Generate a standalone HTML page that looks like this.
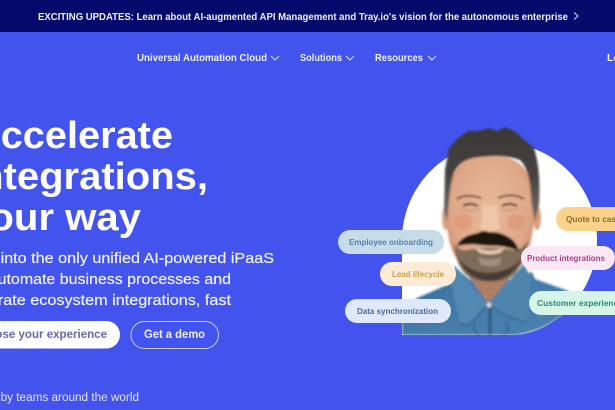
<!DOCTYPE html>
<html><head><meta charset="utf-8">
<style>
html,body{margin:0;padding:0;width:615px;height:410px;overflow:hidden;background:#4354ee}
svg{display:block;filter:blur(.35px)}
text{font-family:"Liberation Sans",sans-serif}
.h{font-size:38px;font-weight:700;fill:#fff}
.s{font-size:15px;fill:#eef0ff;stroke:#eef0ff;stroke-width:.2px}
.n{font-size:10.5px;font-weight:700;fill:#eef0ff}
.p{font-size:8.5px;font-weight:700}
</style></head><body>
<svg width="615" height="410" viewBox="0 0 615 410" xmlns="http://www.w3.org/2000/svg">
<defs>
<filter id="b"><feGaussianBlur stdDeviation="1"/></filter>
<radialGradient id="sk" cx=".5" cy=".42" r=".62"><stop offset="0" stop-color="#e8b99a"/><stop offset=".7" stop-color="#dfa888"/><stop offset="1" stop-color="#c98a68"/></radialGradient>
<linearGradient id="hr" x1="0" y1="0" x2="0" y2="1"><stop offset="0" stop-color="#3a3736"/><stop offset=".5" stop-color="#45423f"/><stop offset="1" stop-color="#76716c"/></linearGradient>
<linearGradient id="dn" x1="0" y1="0" x2="1" y2="1"><stop offset="0" stop-color="#386d9c"/><stop offset=".6" stop-color="#457dab"/><stop offset="1" stop-color="#4a82b2"/></linearGradient>
</defs>
<rect width="615" height="410" fill="#4354ee"/>
<rect width="615" height="32" fill="#04096b"/>
<text class="n" x="38" y="20" fill="#fff" textLength="530" lengthAdjust="spacingAndGlyphs">EXCITING UPDATES: Learn about AI-augmented API Management and Tray.io's vision for the autonomous enterprise</text>
<path d="M574 12.500l4 3.500-4 3.500" fill="none" stroke="#dfe3ff" stroke-width="1"/>
<text class="n" x="137" y="61" textLength="130" lengthAdjust="spacingAndGlyphs">Universal Automation Cloud</text>
<path d="M271 56l4 4 4-4" fill="none" stroke="#dfe3ff" stroke-width="1"/>
<text class="n" x="300" y="61" textLength="42" lengthAdjust="spacingAndGlyphs">Solutions</text>
<path d="M346 56l4 4 4-4" fill="none" stroke="#dfe3ff" stroke-width="1"/>
<text class="n" x="375" y="61" textLength="48" lengthAdjust="spacingAndGlyphs">Resources</text>
<path d="M428 56l4 4 4-4" fill="none" stroke="#dfe3ff" stroke-width="1"/>
<text class="n" x="607" y="61">Login</text>

<text class="h" x="-28" y="148" textLength="201" lengthAdjust="spacingAndGlyphs">Accelerate</text>
<text class="h" x="-32" y="189" textLength="240" lengthAdjust="spacingAndGlyphs">Integrations,</text>
<text class="h" x="-33" y="230" textLength="174" lengthAdjust="spacingAndGlyphs">your way</text>
<text class="s" x="-30" y="263" textLength="304" lengthAdjust="spacingAndGlyphs">Tap into the only unified AI-powered iPaaS</text>
<text class="s" x="-29" y="284" textLength="260" lengthAdjust="spacingAndGlyphs">to automate business processes and</text>
<text class="s" x="-49" y="305" textLength="280" lengthAdjust="spacingAndGlyphs">accelerate ecosystem integrations, fast</text>
<rect x="-40" y="321" width="160" height="27.500" rx="13.700" fill="#fff"/>
<text x="-27" y="338" font-size="11.500" font-weight="700" fill="#6468ae" textLength="134" lengthAdjust="spacingAndGlyphs">Choose your experience</text>
<rect x="131" y="321.500" width="87.500" height="27" rx="13.500" fill="none" stroke="#c9cffa" stroke-width="1"/>
<text x="144" y="338" font-size="11.500" font-weight="700" fill="#eef0ff" textLength="61" lengthAdjust="spacingAndGlyphs">Get a demo</text>
<text x="-42" y="401" font-size="11.500" fill="#e2e5ff" textLength="181" lengthAdjust="spacingAndGlyphs">Trusted by teams around the world</text>

<!-- portrait -->
<path d="M402 335V240a97 97 0 1 1 195 0a97 97 0 0 1-60 90Q525 335 510 335Z" fill="#fff"/>
<g filter="url(#b)">
<!-- shirt -->
<path d="M402 335V312L417 298L449 284L455 267L470 280H510L532 272L535 279L563 289Q585 296 566 312Q545 331 515 335Z" fill="url(#dn)"/>
<!-- collar -->
<path d="M449 276L455 266L488 304L468 326L460 323Z" fill="#5288b2"/>
<path d="M524 264L532 280L526 322L506 316L488 304Z" fill="#4f85ad"/>
<path d="M460 323L468 326L488 304L506 316L526 322" fill="none" stroke="#2b5880" stroke-width="1"/>
<path d="M490 306V335" stroke="#2b5880" stroke-width="3"/>
<circle cx="489" cy="305" r="2.500" fill="#cdd8de"/>
<path d="M476 322Q470 330 480 335M505 322Q512 330 503 335" stroke="#2f6089" stroke-width="1.500" fill="none"/>
<!-- neck -->
<path d="M458 262L488 303L524 262Z" fill="#b07f62"/>
<!-- ears -->
<ellipse cx="446" cy="218" rx="4" ry="12" fill="#d99e7c"/>
<ellipse cx="537" cy="218" rx="4" ry="12" fill="#d99e7c"/>
<!-- face -->
<path d="M447 200Q445 240 455 256Q468 276 490 280Q512 278 525 256Q535 240 534 200Q533 155 490 155Q449 155 447 200Z" fill="url(#sk)"/>
<ellipse cx="463" cy="222" rx="9" ry="8" fill="#dc9575" opacity=".6"/>
<ellipse cx="516" cy="222" rx="9" ry="8" fill="#dc9575" opacity=".6"/>
<!-- beard -->
<path d="M454 244Q456 270 472 279Q490 285 510 278Q524 268 528 240Q521 252 512 250Q505 248 490 248Q475 248 468 250Q460 252 454 244Z" fill="#7f6c59"/>
<path d="M458 258Q468 281 490 281Q512 281 523 256Q514 271 490 273Q470 273 458 258Z" fill="#483a30"/>
<path d="M478 257Q490 262 502 257L499 265Q490 268 481 265Z" fill="#a48e7c"/>
<path d="M474 247Q490 254 506 247L500 253Q490 256 480 253Z" fill="#e6c8b6"/>
<!-- mustache -->
<path d="M458 245Q463 236 477 234Q484 230 490 233Q498 232 507 237Q515 241 518 250Q506 245 492 245Q486 245 478 244Q468 243 458 245Z" fill="#1c1410" stroke="#1c1410" stroke-width="1.500"/>
<!-- brows and eyes -->
<path d="M457 199Q466 193 481 198M498 198Q512 192 524 199" fill="none" stroke="#54392a" stroke-width="1.800"/>
<path d="M463 206Q470 202 478 206M502 206Q509 202 517 206" fill="none" stroke="#3a2a22" stroke-width="2"/>
<path d="M462 209Q470 212 479 209M501 209Q509 212 518 209" fill="none" stroke="#c08c70" stroke-width="1"/>
<!-- nose -->
<path d="M483 205Q481 224 480 228Q490 235 500 228Q498 222 497 205Z" fill="#efc6a8"/>
<!-- hair -->
<path d="M444 210L447 222L449 200Q450 185 454 172Q462 158 480 157Q505 154 520 160Q528 168 530 185L532 205L535 222L539 205Q541 170 534 148L522 138L516 132L505 127L497 131L489 128L478 131L468 131L458 138L449 148L445 170Z" fill="url(#hr)"/>
</g>

<!-- pills -->
<rect x="338" y="230" width="106" height="24" rx="12" fill="#c6dde9"/>
<text class="p" x="349" y="245" fill="#5a80ad" textLength="84" lengthAdjust="spacingAndGlyphs">Employee onboarding</text>
<rect x="380" y="262" width="76" height="24" rx="12" fill="#fcecd6"/>
<text class="p" x="392" y="277" fill="#c8a04c" textLength="52" lengthAdjust="spacingAndGlyphs">Lead lifecycle</text>
<rect x="345" y="299" width="106" height="24" rx="12" fill="#dfe9fb"/>
<text class="p" x="357" y="314" fill="#4b6a9c" textLength="81" lengthAdjust="spacingAndGlyphs">Data synchronization</text>
<rect x="556" y="207" width="80" height="24" rx="12" fill="#fbd28b"/>
<text class="p" x="566" y="222" fill="#8a6c2c" textLength="55" lengthAdjust="spacingAndGlyphs">Quote to cash</text>
<rect x="521" y="246" width="94" height="24" rx="12" fill="#fbe8f4"/>
<text class="p" x="527" y="261" fill="#ab3f8a" textLength="78" lengthAdjust="spacingAndGlyphs">Product integrations</text>
<rect x="529" y="291" width="110" height="24" rx="12" fill="#d6f5e9"/>
<text class="p" x="537" y="306" fill="#2c8a6c" textLength="86" lengthAdjust="spacingAndGlyphs">Customer experience</text>
</svg>
</body></html>
